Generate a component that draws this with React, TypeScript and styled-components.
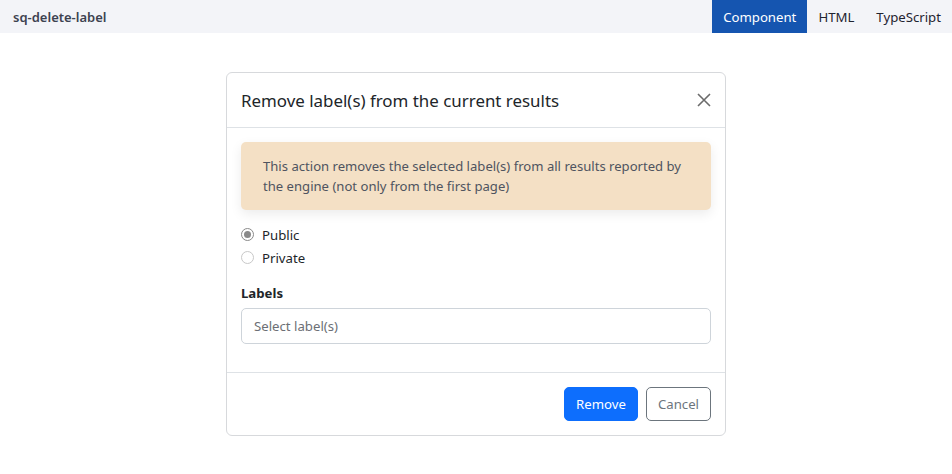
import React from "react";
import styled, { createGlobalStyle } from "styled-components";

const Global = createGlobalStyle`
  html, body { margin: 0; padding: 0; background: #fff; }
  body { font-family: "Noto Sans", "Open Sans", sans-serif; color: #212529; }
  * { box-sizing: border-box; }
`;

const Page = styled.div`
  width: 952px;
  height: 474px;
  display: flex;
  flex-direction: column;
`;

const TopBar = styled.div`
  height: 33px;
  background: #f3f4f8;
  display: flex;
  align-items: stretch;
  justify-content: space-between;
`;

const Name = styled.div`
  display: flex;
  align-items: center;
  padding-left: 13px;
  font-size: 13px;
  font-weight: 600;
  color: #3d4250;
`;

const Tabs = styled.div`
  display: flex;
`;

const Tab = styled.div<{ $active?: boolean }>`
  display: flex;
  align-items: center;
  padding: 0 11px;
  font-size: 13.2px;
  color: ${(p) => (p.$active ? "#fff" : "#1f2330")};
  background: ${(p) => (p.$active ? "#1555b0" : "transparent")};
`;

const Stage = styled.div`
  flex: 1;
  display: flex;
  justify-content: center;
  padding-top: 39px;
`;

const Modal = styled.div`
  width: 500px;
  height: 364px;
  border: 1px solid #d7d9dc;
  border-radius: 6px;
  display: flex;
  flex-direction: column;
  background: #fff;
`;

const Header = styled.div`
  height: 55px;
  border-bottom: 1px solid #dee2e6;
  display: flex;
  align-items: center;
  justify-content: space-between;
  padding: 0 14px 0 14px;
`;

const Title = styled.div`
  font-size: 16.9px;
  color: #212529;
`;

const Close = styled.button`
  width: 14px;
  height: 14px;
  border: none;
  background: none;
  padding: 0;
  display: flex;
  align-items: center;
  justify-content: center;
`;

const Body = styled.div`
  flex: 1;
  padding: 14px 14px 0 14px;
  display: flex;
  flex-direction: column;
  border-bottom: 1px solid #dee2e6;
`;

const Alert = styled.div`
  background: #f4e0c5;
  border-radius: 5px;
  padding: 14px 22px;
  font-size: 13.1px;
  line-height: 20px;
  color: #4f5460;
  box-shadow: 0 4px 12px rgba(0, 0, 0, 0.08);
`;

const RadioGroup = styled.div`
  margin-top: 13px;
  display: flex;
  flex-direction: column;
`;

const RadioRow = styled.label`
  display: flex;
  align-items: center;
  height: 23px;
  font-size: 13.2px;
  color: #212529;
  gap: 8px;
`;

const RadioDot = styled.span<{ $checked?: boolean }>`
  width: 13px;
  height: 13px;
  border-radius: 50%;
  border: 1px solid ${(p) => (p.$checked ? "#8a8a8a" : "#c8c8c8")};
  display: flex;
  align-items: center;
  justify-content: center;
  &::after {
    content: "";
    width: 7px;
    height: 7px;
    border-radius: 50%;
    background: ${(p) => (p.$checked ? "#8a8a8a" : "transparent")};
  }
`;

const FieldLabel = styled.div`
  margin-top: 13px;
  font-size: 13.2px;
  font-weight: 700;
  color: #212529;
  height: 21px;
  display: flex;
  align-items: center;
`;

const Input = styled.div`
  margin-top: 5px;
  height: 36px;
  border: 1px solid #ced4da;
  border-radius: 5px;
  display: flex;
  align-items: center;
  padding: 0 12px;
  font-size: 13.2px;
  color: #6c6f75;
`;

const Footer = styled.div`
  height: 62px;
  display: flex;
  align-items: center;
  justify-content: flex-end;
  gap: 8px;
  padding: 0 14px;
`;

const Button = styled.button<{ $primary?: boolean }>`
  height: 34px;
  padding: 0 11px;
  border-radius: 5px;
  font-family: inherit;
  font-size: 13.2px;
  border: 1px solid ${(p) => (p.$primary ? "#0d6efd" : "#6c757d")};
  background: ${(p) => (p.$primary ? "#0d6efd" : "#fff")};
  color: ${(p) => (p.$primary ? "#fff" : "#6c757d")};
`;

export default function App() {
  return (
    <Page>
      <Global />
      <TopBar>
        <Name>sq-delete-label</Name>
        <Tabs>
          <Tab $active>Component</Tab>
          <Tab>HTML</Tab>
          <Tab>TypeScript</Tab>
        </Tabs>
      </TopBar>
      <Stage>
        <Modal>
          <Header>
            <Title>Remove label(s) from the current results</Title>
            <Close aria-label="Close">
              <svg width="14" height="14" viewBox="0 0 14 14">
                <path d="M1 1L13 13M13 1L1 13" stroke="#6b6b6b" strokeWidth="1.6" />
              </svg>
            </Close>
          </Header>
          <Body>
            <Alert>
              This action removes the selected label(s) from all results reported by the engine (not only
              from the first page)
            </Alert>
            <RadioGroup>
              <RadioRow>
                <RadioDot $checked />
                Public
              </RadioRow>
              <RadioRow>
                <RadioDot />
                Private
              </RadioRow>
            </RadioGroup>
            <FieldLabel>Labels</FieldLabel>
            <Input>Select label(s)</Input>
          </Body>
          <Footer>
            <Button $primary>Remove</Button>
            <Button>Cancel</Button>
          </Footer>
        </Modal>
      </Stage>
    </Page>
  );
}
